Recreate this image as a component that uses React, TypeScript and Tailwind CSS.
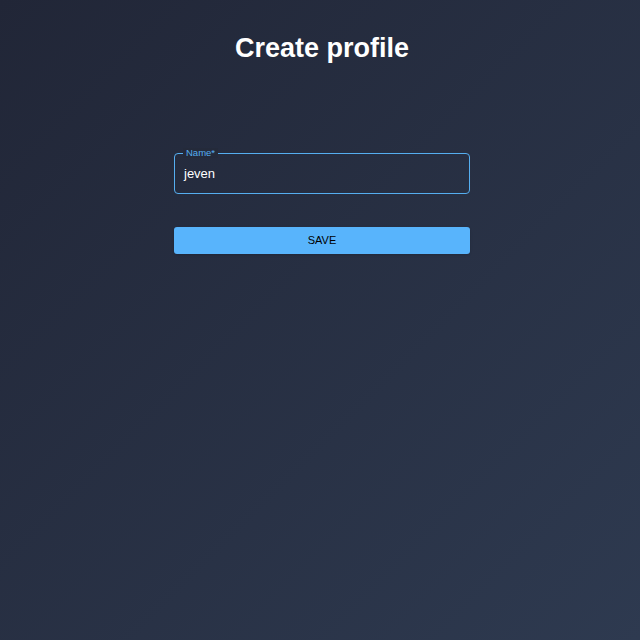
export default function App() {
  return (
    <div className="min-h-[640px] w-full bg-gradient-to-br from-[#212637] to-[#2e3a50] pl-[4px] font-['Liberation_Sans',Arial,sans-serif] text-white">
      <div className="mx-auto flex w-[296px] flex-col">
        <h1 className="mt-[32px] whitespace-nowrap text-center text-[27px] font-bold leading-[32px] text-white">
          Create profile
        </h1>

        <div className="relative mt-[89px] flex h-[41px] items-center rounded-[4px] border-[1.5px] border-[#55aef0] px-[9px]">
          <span className="absolute -top-[6px] left-[8px] bg-[#242a3a] px-[3px] text-[9.5px] leading-[10px] text-[#55aef0]">
            Name*
          </span>
          <span className="text-[13px] leading-[20px] text-white">jeven</span>
        </div>

        <button
          type="button"
          className="mt-[33px] h-[27px] w-full rounded-[3px] bg-[#58b4fc] text-[11px] font-medium text-black shadow-sm"
        >
          SAVE
        </button>
      </div>
    </div>
  );
}
